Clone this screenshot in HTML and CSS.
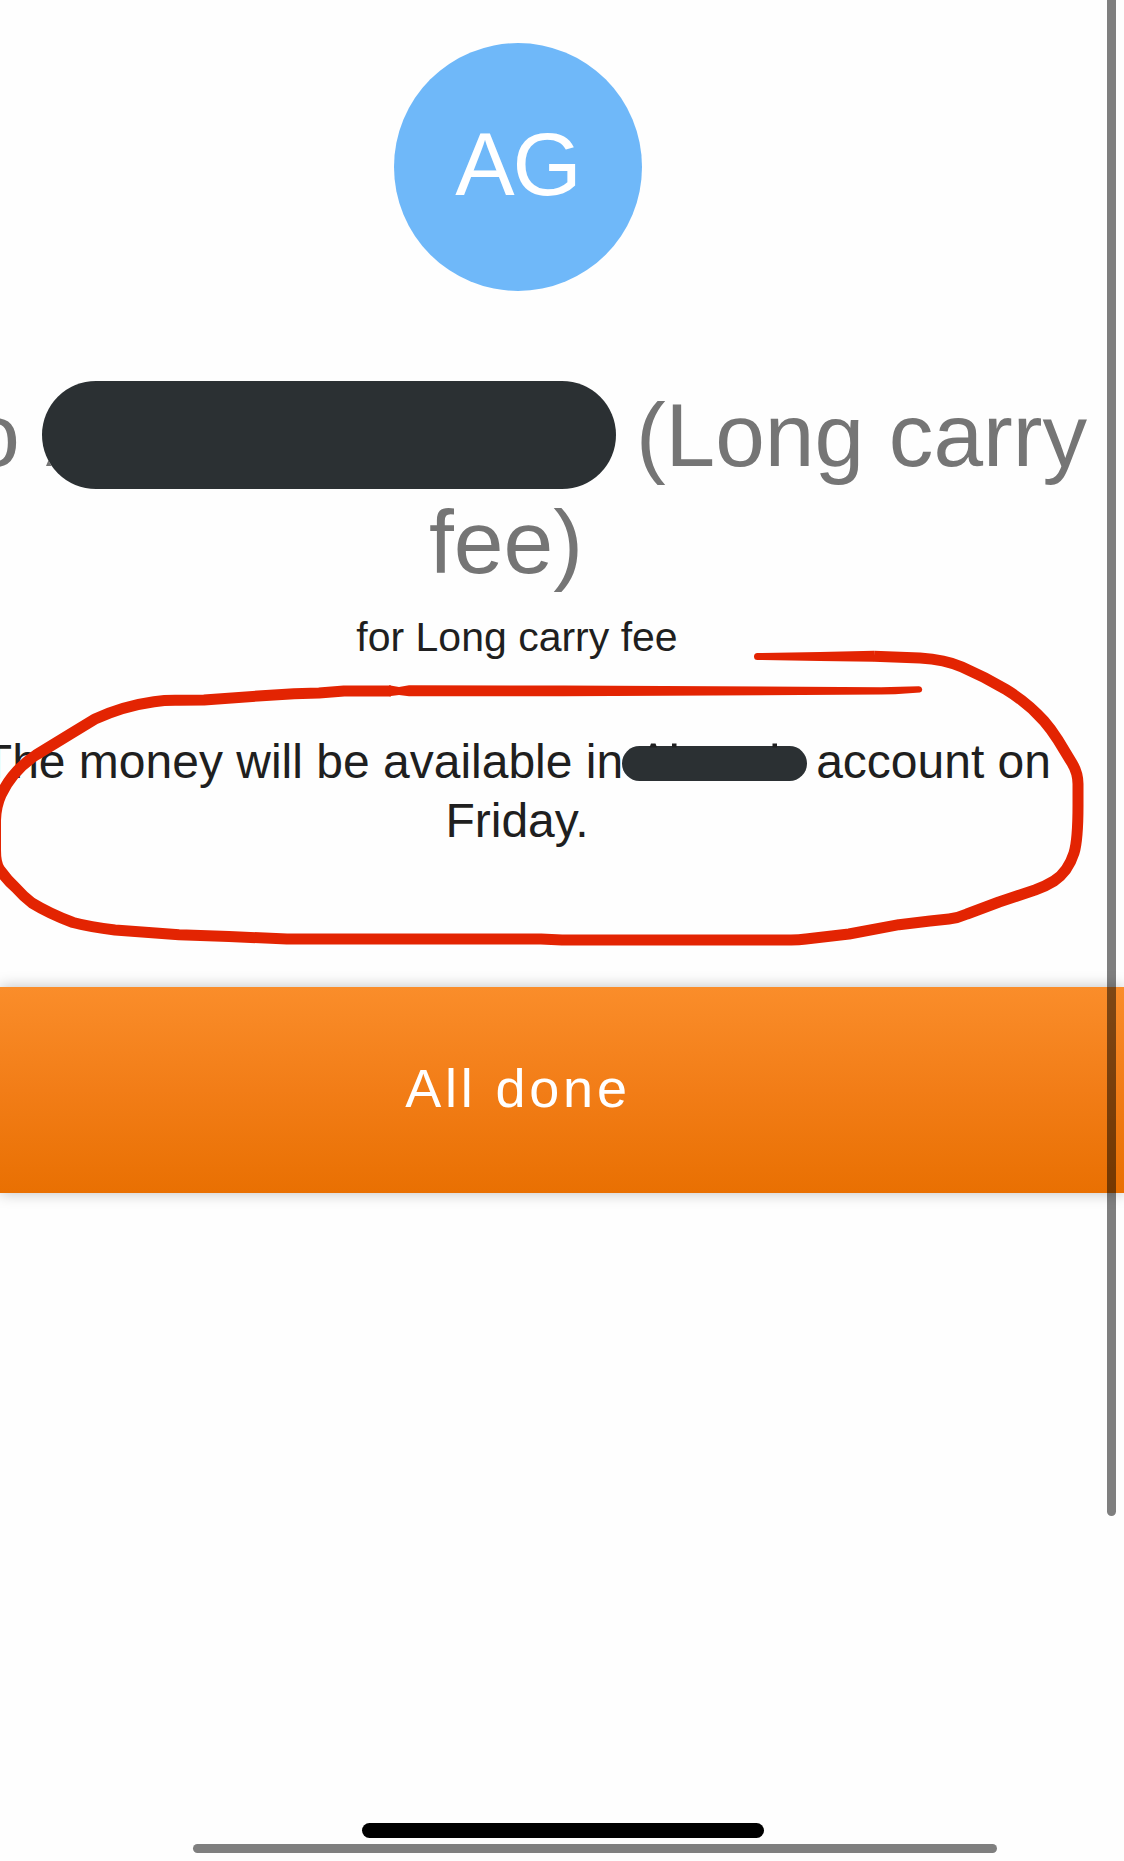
FILE: index.html
```
<!DOCTYPE html>
<html lang="en">
<head>
    <meta charset="UTF-8">
    <meta name="viewport" content="width=device-width, initial-scale=1.0">
    <title>Payment sent</title>
    <link rel="stylesheet" href="styles.css">
</head>
<body>
    <main class="confirmation">
        <div class="avatar">AG</div>

        <h1 class="recipient">
            <span class="line line-name">
                <span>To</span>
                <span class="redacted redacted-name"></span>
                <span>(Long carry</span>
            </span>
            <span class="line line-fee">fee)</span>
        </h1>

        <p class="reason">for Long carry fee</p>

        <p class="message">
            <span class="line line-account">
                <span>The money will be available in</span>
                <span class="redacted redacted-account"></span>
                <span>account on</span>
            </span>
            <span class="line">Friday.</span>
        </p>

        <button class="btn-done">All done</button>
    </main>

    <!-- Pen marks drawn over the page -->
    <svg class="markup" width="1124" height="1861" viewBox="0 0 1124 1861">
        <path class="letter-edge" d="M46 466L48.5 460L51.5 466Z"/>
        <path class="letter-tip" d="M651 743.5h4.5l1.5 4h-7.5ZM672 743.5h4.5v4H672ZM772.5 743.5h4.5v4h-4.5Z"/>
        <path class="pen" d="M874 656.3L920 658Q945 659.5 962 667Q985 677 1006 689.5Q1028 703 1044 721Q1051 729 1058 740L1072 763Q1078 773 1078 784V805Q1078 840 1074 853Q1068 872 1054 881Q1046 886 1035 890L999 902L967 914Q958 918 949 919L930 921L899 924.7L849 934L806 939Q799 940 791 940H562L541 939H287L229 936.5L179 934.7L115 930Q90 927 73 922.5Q50 914 32 903Q23 896 16 888Q7 880 0 870Q-4.5 864 -4.5 850V820Q-4 806 1 795Q12 771 36 755L72 733L95 719Q123 706 154 701.7Q166 700 179 700.3L204 700L258 696L294 693.7L319 693L344 691H391"/>
        <path class="pen-fill" d="M757.5 653L820 652L874 650.8V661.8L820 661L757.5 660A3.4 3.4 0 0 1 757.5 653Z"/>
        <path class="pen-fill" d="M389 685.2L399 687L409 685.2L562 685.6L881 687.2L919 686.2A3.3 3.3 0 0 1 920 692.6L895 694.3L881 694.6L562 696.2H409L399 695L389 696.2Z"/>
    </svg>

    <div class="scrollbar scrollbar-vertical"></div>
    <div class="home-indicator"></div>
    <div class="scrollbar scrollbar-horizontal"></div>
</body>
</html>
```
FILE: styles.css
```
* {
    margin: 0;
    padding: 0;
    box-sizing: border-box;
}

body {
    position: relative;
    width: 1124px;
    height: 1861px;
    overflow: hidden;
    background: #fefefe;
    color: #1f1f20;
    font-family: "Liberation Sans", Arial, sans-serif;
}

.confirmation {
    display: flex;
    flex-direction: column;
    padding-top: 43px;
}

.avatar {
    display: flex;
    align-items: center;
    justify-content: center;
    width: 248px;
    height: 248px;
    margin-left: 394px;
    padding: 0 1px 5px 0;
    border-radius: 50%;
    background: #6fb8f9;
    color: #fff;
    font-size: 89px;
    letter-spacing: -2px;
}

.line {
    display: block;
    width: 1034px;
    text-align: center;
    white-space: nowrap;
}

.line-name,
.line-account {
    display: flex;
    align-items: center;
    justify-content: flex-end;
    width: 100%;
}

.recipient {
    margin-top: 90px;
    color: #757575;
    font-size: 89.5px;
    font-weight: 400;
    line-height: 107px;
}

.line-name {
    padding-right: 37px;
    font-size: 89.2px;
}

.line-fee {
    padding-right: 22px;
}

.redacted {
    flex-shrink: 0;
    background: #2b3033;
}

.redacted-name {
    width: 574px;
    height: 108px;
    margin: 0 20px 0 22px;
    border-radius: 54px;
}

.reason {
    width: 1034px;
    margin-top: 16px;
    font-size: 41px;
    line-height: 50px;
    text-align: center;
}

.message {
    margin-top: 70px;
    font-size: 48px;
    line-height: 59px;
}

.line-account {
    padding-right: 73px;
}

.redacted-account {
    width: 185px;
    height: 35px;
    margin: 3px 9px 0 -1px;
    border-radius: 18px;
}

.btn-done {
    width: 100%;
    height: 206px;
    margin-top: 137px;
    padding: 0 88px 5px 0;
    border: none;
    background: linear-gradient(#fa8d2a, #f27d17 50%, #e97002);
    box-shadow: 0 0 14px rgba(0, 0, 0, 0.25);
    color: #fff;
    font-family: inherit;
    font-size: 54px;
    letter-spacing: 3.8px;
}

.markup {
    position: absolute;
    top: 0;
    left: 0;
}

.pen {
    fill: none;
    stroke: #e32402;
    stroke-width: 11;
    stroke-linejoin: round;
}

.pen-fill {
    fill: #e32402;
}

.letter-edge {
    fill: #757575;
}

.letter-tip {
    fill: #1f1f20;
}

.scrollbar {
    position: absolute;
    background: rgba(0, 0, 0, 0.5);
}

.scrollbar-vertical {
    top: 0;
    left: 1107px;
    width: 9px;
    height: 1516px;
    border-radius: 0 0 5px 5px;
}

.scrollbar-horizontal {
    top: 1844px;
    left: 193px;
    width: 804px;
    height: 9px;
    border-radius: 5px;
}

.home-indicator {
    position: absolute;
    top: 1823px;
    left: 362px;
    width: 402px;
    height: 15px;
    border-radius: 8px;
    background: #000;
}
```
